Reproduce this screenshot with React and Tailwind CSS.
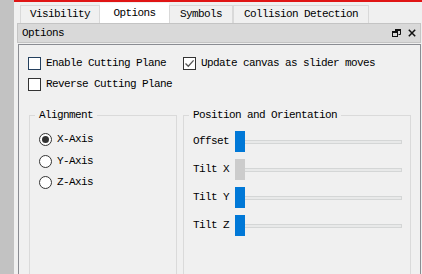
import React from 'react';

const Check = ({ checked, focus }) => (
    <span
        className={`flex h-[13px] w-[13px] shrink-0 items-center justify-center border bg-white ${
            focus ? 'border-[#24405e]' : 'border-[#333333]'
        }`}
    >
        {checked && (
            <svg width="11" height="11" viewBox="0 0 11 11">
                <path d="M1.5 5.5 L4.3 8.3 L9.6 2.4" fill="none" stroke="#555" strokeWidth="1.3" />
            </svg>
        )}
    </span>
);

const Radio = ({ checked, label }) => (
    <div className="flex h-[13px] items-center">
        <span className="flex h-[13px] w-[13px] shrink-0 items-center justify-center rounded-full border border-[#333333] bg-white">
            {checked && <span className="h-[7px] w-[7px] rounded-full bg-[#333333]" />}
        </span>
        <span className="ml-[5px]">{label}</span>
    </div>
);

const Slider = ({ label, active }) => (
    <div className="flex h-[21px] items-center">
        <span className="w-[42px] shrink-0">{label}</span>
        <div className="relative flex h-full w-[167px] items-center">
            <div className="h-[4px] w-full border border-[#d4d6d6] bg-[#e8e9e9]" />
            <span
                className={`absolute left-0 top-0 h-[21px] w-[10px] ${
                    active ? 'bg-[#0078d7]' : 'bg-[#cccccc]'
                }`}
            />
        </div>
    </div>
);

const Group = ({ title, className, children }) => (
    <div className={`relative border border-[#dadada] ${className}`}>
        <span className="absolute left-[5px] top-[-8px] bg-[#f0f0f0] px-[4px] leading-[14px]">
            {title}
        </span>
        {children}
    </div>
);

const TABS = [
    { name: 'Visibility', w: 'w-[80px]' },
    { name: 'Options', w: 'w-[69px]', active: true },
    { name: 'Symbols', w: 'w-[64px]' },
    { name: 'Collision Detection', w: 'w-[136px]' },
];

export default function App() {
    return (
        <div className="flex h-[274px] w-[422px] overflow-hidden bg-[#f0f0f0] font-['Liberation_Mono',monospace] text-[11px] leading-[13px] tracking-[-0.6px] text-black">
            <div className="w-[14px] shrink-0 bg-[#c2c2c2]" />
            <div className="flex min-w-0 flex-1 flex-col border-t-2 border-[#e01515]">
                {/* tab strip */}
                <div className="flex h-[21px] items-end pl-[6px]">
                    {TABS.map((t) =>
                        t.active ? (
                            <div
                                key={t.name}
                                className={`flex h-[20px] items-center justify-center bg-white ${t.w}`}
                            >
                                {t.name}
                            </div>
                        ) : (
                            <div
                                key={t.name}
                                className={`flex h-[18px] items-center justify-center border-x border-t border-[#d9d9d9] bg-[#f0f0f0] ${t.w}`}
                            >
                                {t.name}
                            </div>
                        )
                    )}
                </div>

                {/* docked panel */}
                <div className="ml-[3px] mr-[1px] flex min-h-0 flex-1 flex-col">
                    <div className="flex h-[20px] shrink-0 items-center border border-[#c4c4c4] bg-[#d9d9d9] pl-[4px] pr-[4px]">
                        <span>Options</span>
                        <div className="ml-auto flex items-center gap-[7px]">
                            <svg width="9" height="8" viewBox="0 0 9 8">
                                <path d="M3.5 2.5 V0.5 H8.5 V5.5 H6.5" fill="none" stroke="#111" strokeWidth="1" />
                                <rect x="3" y="0" width="6" height="2" fill="#111" />
                                <rect x="0.5" y="2.5" width="5" height="5" fill="none" stroke="#111" strokeWidth="1" />
                                <rect x="0" y="2" width="6" height="2" fill="#111" />
                            </svg>
                            <svg width="8" height="8" viewBox="0 0 8 8">
                                <path d="M0.8 0.8 L7.2 7.2 M7.2 0.8 L0.8 7.2" stroke="#111" strokeWidth="1.5" />
                            </svg>
                        </div>
                    </div>

                    <div className="ml-[1px] mt-[1px] flex min-h-0 flex-1 flex-col border-x border-t border-[#8a8c92] pl-[9px] pr-[8px] pt-[12px]">
                        <div className="flex h-[13px] items-center">
                            <div className="flex w-[155px] items-center">
                                <Check focus />
                                <span className="ml-[5px]">Enable Cutting Plane</span>
                            </div>
                            <div className="flex items-center">
                                <Check checked />
                                <span className="ml-[5px]">Update canvas as slider moves</span>
                            </div>
                        </div>
                        <div className="mt-[8px] flex h-[13px] items-center">
                            <Check />
                            <span className="ml-[5px]">Reverse Cutting Plane</span>
                        </div>

                        <div className="ml-[1px] mt-[24px] flex gap-[6px]">
                            <Group title="Alignment" className="h-[200px] w-[148px] shrink-0">
                                <div className="flex flex-col gap-[8.5px] pl-[9px] pt-[17px]">
                                    <Radio checked label="X-Axis" />
                                    <Radio label="Y-Axis" />
                                    <Radio label="Z-Axis" />
                                </div>
                            </Group>
                            <Group title="Position and Orientation" className="h-[200px] w-[228px] shrink-0">
                                <div className="flex flex-col gap-[7px] pl-[9px] pt-[15px]">
                                    <Slider label="Offset" active />
                                    <Slider label="Tilt X" />
                                    <Slider label="Tilt Y" active />
                                    <Slider label="Tilt Z" active />
                                </div>
                            </Group>
                        </div>
                    </div>
                </div>
            </div>
        </div>
    );
}
